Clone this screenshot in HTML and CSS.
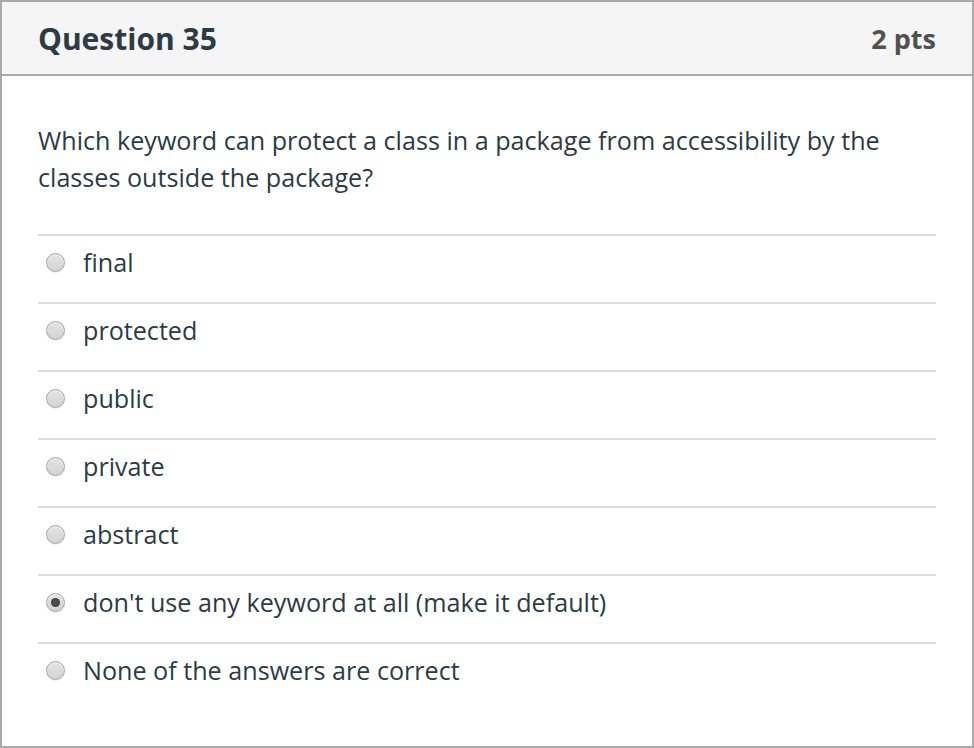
FILE: index.html
```html
<!DOCTYPE html>
<html>
<head>
<meta charset="utf-8">
<link rel="stylesheet" href="styles.css">
</head>
<body>
<div class="question">
  <div class="header">
    <span class="title">Question 35</span>
    <span class="pts">2 pts</span>
  </div>
  <div class="content">
    <p class="text">Which keyword can protect a class in a package from accessibility by the classes outside the package?</p>
    <div class="answers">
      <label class="answer"><span class="radio"></span><span class="label">final</span></label>
      <label class="answer"><span class="radio"></span><span class="label">protected</span></label>
      <label class="answer"><span class="radio"></span><span class="label">public</span></label>
      <label class="answer"><span class="radio"></span><span class="label">private</span></label>
      <label class="answer"><span class="radio"></span><span class="label">abstract</span></label>
      <label class="answer"><span class="radio checked"></span><span class="label">don't use any keyword at all (make it default)</span></label>
      <label class="answer"><span class="radio"></span><span class="label">None of the answers are correct</span></label>
    </div>
  </div>
</div>
</body>
</html>
```
FILE: styles.css
```css
html, body {
  margin: 0;
  padding: 0;
  background: #fff;
}
.question {
  box-sizing: border-box;
  width: 974px;
  height: 748px;
  border: 2px solid #a9a9a9;
  font-family: "Open Sans", sans-serif;
  color: #2d3b45;
}
.header {
  box-sizing: border-box;
  height: 74px;
  background: #f5f5f5;
  border-bottom: 2px solid #a9a9a9;
  display: flex;
  justify-content: space-between;
  align-items: center;
  padding: 0 36px 0 36px;
}
.title {
  font-weight: 700;
  font-size: 30px;
}
.pts {
  font-weight: 700;
  font-size: 27px;
  color: #505050;
}
.content {
  padding: 46px 36px 0 36px;
}
.text {
  margin: 0 0 38px 0;
  font-size: 25.15px;
  line-height: 37px;
}
.answer {
  box-sizing: border-box;
  display: flex;
  align-items: center;
  height: 68px;
  padding-bottom: 14px;
  border-top: 2px solid #dddddd;
}
.radio {
  box-sizing: border-box;
  flex: none;
  width: 19px;
  height: 19px;
  border-radius: 50%;
  margin-left: 8px;
  margin-right: 18px;
  border: 1px solid #a4a4a4;
  background: linear-gradient(#e4e4e4, #d2d2d2);
  box-shadow: inset 0 1px 1px rgba(255,255,255,0.6), 0 1px 1px rgba(0,0,0,0.08);
  display: flex;
  align-items: center;
  justify-content: center;
}
.radio.checked::after {
  content: "";
  width: 9px;
  height: 9px;
  border-radius: 50%;
  background: radial-gradient(#555, #3a3a3a);
}
.label {
  font-size: 25.15px;
}
```
